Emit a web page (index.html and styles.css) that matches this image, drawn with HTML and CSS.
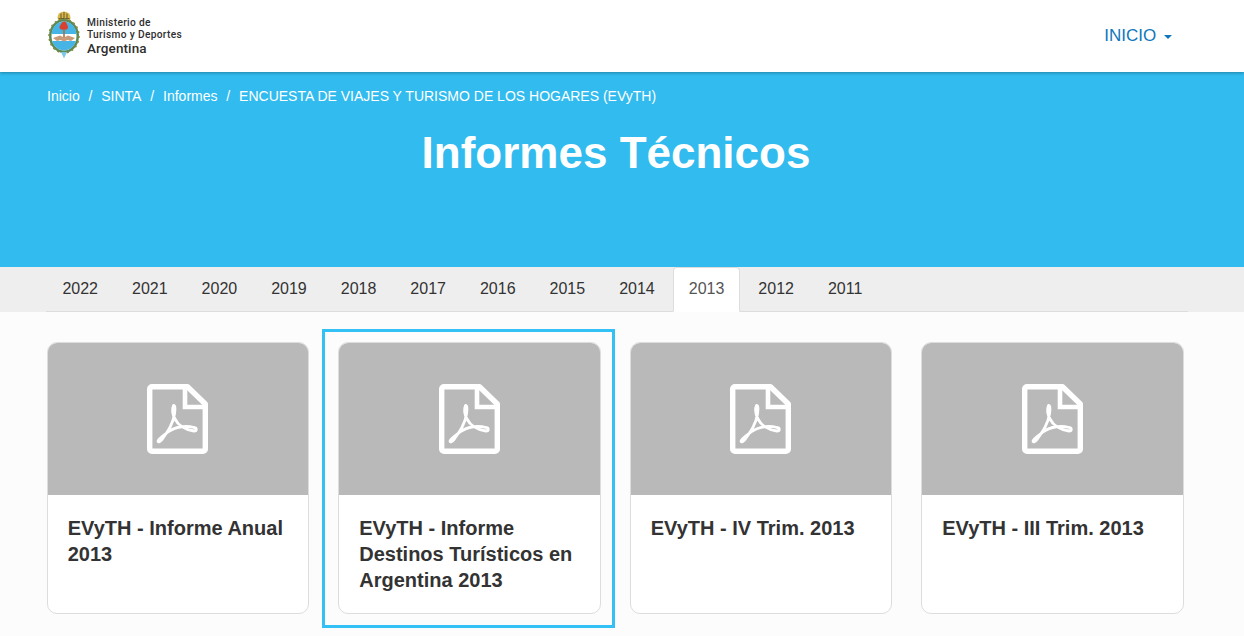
FILE: index.html
```html
<!DOCTYPE html>
<html lang="es">
<head>
<meta charset="utf-8">
<title>Informes Técnicos</title>
<link rel="stylesheet" href="styles.css">
</head>
<body>
<header class="topbar">
  <a class="brand" href="#">
    <svg class="crest" width="32" height="48" viewBox="0 0 32 48" aria-hidden="true">
      <ellipse cx="16" cy="6.500" rx="6.500" ry="6" fill="#d9b84a"/>
      <path d="M10.500 7.500h11M13 2.500v5M16 1v6.500M19 2.500v5" stroke="#6f6030" stroke-width="1.100"/>
      <ellipse cx="16" cy="25" rx="15" ry="17" fill="#5b8a57"/>
      <ellipse cx="16" cy="25" rx="15" ry="17" fill="none" stroke="#8a8a3f" stroke-width="1.500" stroke-dasharray="2 3"/>
      <ellipse cx="16" cy="25" rx="12.500" ry="14.500" fill="#fff"/>
      <path d="M3.600 23C4 15.500 9.500 10.500 16 10.500S28 15.500 28.400 23z" fill="#46b4e4"/>
      <path d="M4.200 30h23.600C26.500 35.500 21 39.500 16 39.500S5.500 35.500 4.200 30z" fill="#46b4e4"/>
      <path d="M14 11.500c2-1.500 4-1 4.500 .8.400 1.300 1.500 2.600 1.500 4 0 1.700-1.500 2.700-4 2.700s-4.500-1-4.500-2.700c0-1.600 1.700-3 2.500-4.800z" fill="#d8402f"/>
      <rect x="15.200" y="18" width="1.600" height="10" fill="#a5743f"/>
      <path d="M5 27l7-2.500 4 2 4-2 7 2.500-4 3-3.500-1-3.500 1.500-3.500-1.500-3.500 1z" fill="#c99b78"/>
      <path d="M13 41l3 6.500 3-6.500z" fill="#7cc8ea"/>
    </svg>
    <span class="brand-text">
      <span class="brand-line">Ministerio de</span>
      <span class="brand-line">Turismo y Deportes</span>
      <span class="brand-country">Argentina</span>
    </span>
  </a>
  <a class="menu" href="#">INICIO <span class="caret"></span></a>
</header>

<section class="hero">
  <nav class="crumbs">
    <a href="#">Inicio</a><span class="sep">/</span><a href="#">SINTA</a><span class="sep">/</span><a href="#">Informes</a><span class="sep">/</span><span>ENCUESTA DE VIAJES Y TURISMO DE LOS HOGARES (EVyTH)</span>
  </nav>
  <h1>Informes Técnicos</h1>
</section>

<div class="tabs-band">
  <ul class="tabs">
    <li><a href="#">2022</a></li>
    <li><a href="#">2021</a></li>
    <li><a href="#">2020</a></li>
    <li><a href="#">2019</a></li>
    <li><a href="#">2018</a></li>
    <li><a href="#">2017</a></li>
    <li><a href="#">2016</a></li>
    <li><a href="#">2015</a></li>
    <li><a href="#">2014</a></li>
    <li class="active"><a href="#">2013</a></li>
    <li><a href="#">2012</a></li>
    <li><a href="#">2011</a></li>
  </ul>
</div>

<main class="cards">
  <article class="card">
    <div class="thumb"><svg class="pdf"><use href="#pdf-icon"/></svg></div>
    <h3>EVyTH - Informe Anual 2013</h3>
  </article>
  <article class="card highlighted">
    <div class="thumb"><svg class="pdf"><use href="#pdf-icon"/></svg></div>
    <h3>EVyTH - Informe Destinos Turísticos en Argentina 2013</h3>
  </article>
  <article class="card">
    <div class="thumb"><svg class="pdf"><use href="#pdf-icon"/></svg></div>
    <h3>EVyTH - IV Trim. 2013</h3>
  </article>
  <article class="card">
    <div class="thumb"><svg class="pdf"><use href="#pdf-icon"/></svg></div>
    <h3>EVyTH - III Trim. 2013</h3>
  </article>
</main>

<svg class="defs" width="0" height="0" aria-hidden="true">
  <symbol id="pdf-icon" viewBox="0 0 61 70">
    <path d="M5 2.700h35.500L58.300 20v45A2.300 2.300 0 0 1 56 67.300H5A2.300 2.300 0 0 1 2.700 65V5A2.300 2.300 0 0 1 5 2.700z" fill="none" stroke="#fff" stroke-width="5.400" stroke-linejoin="round"/>
    <path d="M38 3v20h20" fill="none" stroke="#fff" stroke-width="4.600"/>
    <path d="M26.500 21.500C24.500 26 26 31 28 35C31 41 38 46 47 47C50 47 50 44 47 43.500C40 41.500 29 42 21 48C17 51 11 55 11 57C11 59 14 57.500 16 54C21 47 26 40 27.500 30C28 26 28.500 21.500 26.500 21.500z" fill="none" stroke="#fff" stroke-width="2.800" stroke-linejoin="round"/>
  </symbol>
</svg>
</body>
</html>
```
FILE: styles.css
```css
*, *::after { box-sizing: border-box; }
html, body { margin: 0; padding: 0; }
body {
  height: 636px;
  overflow: hidden;
  background: #fcfcfc;
  font-family: "Liberation Sans", Arial, sans-serif;
  color: #333;
}
a { text-decoration: none; color: inherit; }

.topbar {
  position: relative;
  z-index: 2;
  height: 72px;
  background: #fff;
  box-shadow: 0 1px 3px rgba(0, 0, 0, .3);
  display: flex;
  align-items: flex-start;
  justify-content: space-between;
  padding: 11px 72px 0 48px;
}
.brand { display: flex; gap: 7px; align-items: flex-start; }
.crest { display: block; }
.brand-text { display: flex; flex-direction: column; padding-top: 6px; font-family: Roboto, sans-serif; color: #2f2f2f; }
.brand-line { font-size: 10.200px; line-height: 12px; font-weight: 500; letter-spacing: .33px; white-space: nowrap; }
.brand-country { font-size: 13.500px; line-height: 15.500px; font-weight: 500; letter-spacing: .1px; }
.menu { margin-top: 15px; font-size: 17px; line-height: 20px; color: #0f76bc; }
.caret {
  display: inline-block;
  width: 0; height: 0;
  margin-left: 3px;
  vertical-align: middle;
  border-top: 4px solid #0f76bc;
  border-left: 4px solid transparent;
  border-right: 4px solid transparent;
}

.hero { height: 195px; background: #31bbee; color: #fff; padding: 16px 59px 0 47px; }
.crumbs { display: flex; font-size: 14px; line-height: 16px; }
.sep { padding: 0 8.850px; }
.hero h1 { margin: 24px 0 0; text-align: center; font-size: 44px; line-height: 50px; font-weight: 700; letter-spacing: 0; }

.tabs-band { height: 45px; background: #eee; padding-left: 46.400px; }
.tabs {
  list-style: none;
  margin: 0;
  padding: 0;
  width: 1142px;
  height: 45px;
  display: flex;
  border-bottom: 1px solid #ddd;
}
.tabs li { margin-right: 2px; height: 45px; }
.tabs a {
  display: block;
  padding: 10px 15px 11px;
  border: 1px solid transparent;
  border-radius: 4px 4px 0 0;
  font-size: 16px;
  line-height: 22px;
  height: 45px;
  color: #333;
}
.tabs .active a { background: #fff; color: #555; border-color: #ddd #ddd #fff; }

.cards {
  display: grid;
  grid-template-columns: repeat(4, 262.500px);
  column-gap: 29px;
  padding: 30px 0 0 46.750px;
}
.card {
  position: relative;
  height: 272px;
  background: #fff;
  border: 1px solid #ddd;
  border-radius: 10px;
}
.thumb {
  height: 152px;
  background: #b9b9b9;
  border-radius: 9px 9px 0 0;
  display: flex;
  align-items: center;
  justify-content: center;
}
.pdf { width: 61px; height: 70px; display: block; margin-right: .5px; }
.card h3 { margin: 20px 20px 0; font-size: 20px; line-height: 26px; font-weight: 700; color: #333; }
.highlighted::after {
  content: "";
  position: absolute;
  left: -17px;
  top: -14px;
  width: 293px;
  height: 299px;
  border: 3px solid #33c1f5;
}
.defs { position: absolute; }
```
